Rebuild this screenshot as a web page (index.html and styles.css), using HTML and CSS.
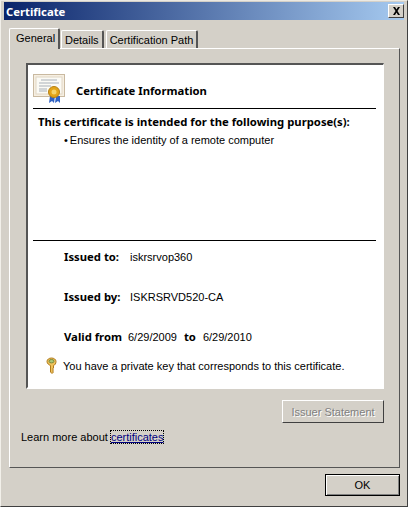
FILE: index.html
```html
<!DOCTYPE html>
<html lang="en">
<head>
    <meta charset="UTF-8">
    <meta name="viewport" content="width=device-width, initial-scale=1.0">
    <title>Certificate</title>
    <link rel="stylesheet" href="styles.css">
</head>
<body>
    <div class="window">
        <div class="titlebar">
            <span class="title">Certificate</span>
            <span class="close">
                <svg width="9" height="8" viewBox="0 0 9 8"><path d="M1 0h2l1.500 2.500L6 0h2L5.500 4 8 8H6L4.500 5.500 3 8H1l2.500-4z" fill="#000"/></svg>
            </span>
        </div>
        <ul class="tabs">
            <li class="tab active">General</li>
            <li class="tab">Details</li>
            <li class="tab tab-path">Certification Path</li>
        </ul>
        <div class="panel">
            <div class="sheet">
                <div class="sheet-head">
                    <svg class="cert-icon" width="33" height="30" viewBox="0 0 33 30">
                        <rect x="0.500" y="0.500" width="31" height="22" fill="#f6efe2" stroke="#c9b9a0"/>
                        <rect x="3" y="3" width="26" height="17" fill="#fbfaf5" stroke="#e0d6c4"/>
                        <path d="M8 6h16M6 9h20M6 12h12M6 15h8M6 17h8" stroke="#a9b0b8"/>
                        <path d="M17 22l-1 7 3-2 2 2 1-7zM23 22l-1 7 3-2 2 2 0-7z" fill="#2f62c4"/>
                        <circle cx="21" cy="18" r="5.500" fill="#e2a418" stroke="#b67f12"/>
                        <circle cx="21" cy="18" r="2.500" fill="#f4d36a"/>
                    </svg>
                    <span class="head-text">Certificate Information</span>
                </div>
                <div class="purpose">
                    <p class="purpose-title">This certificate is intended for the following purpose(s):</p>
                    <p class="purpose-item"><span class="bullet">•</span>Ensures the identity of a remote computer</p>
                </div>
                <div class="details">
                    <p class="row"><b class="label">Issued to:</b>iskrsrvop360</p>
                    <p class="row"><b class="label">Issued by:</b>ISKRSRVD520-CA</p>
                    <p class="row"><b class="valid">Valid from</b>6/29/2009<b class="to">to</b>6/29/2010</p>
                    <p class="key-row">
                        <svg class="key-icon" width="11" height="17" viewBox="0 0 11 17">
                            <path d="M5.500 1C3 1 1 2.500 1 4.500S3 8 4.500 8.500V15l1.500 1.500 1.500-1.500-1-1 1-1-1-1 1-1V8.500C9 8 10 6.500 10 4.500S8 1 5.500 1z" fill="#efc25a" stroke="#b07a1c"/>
                            <ellipse cx="5.500" cy="4.200" rx="2.500" ry="1.700" fill="#a9c77a" stroke="#7d8a3a"/>
                        </svg>
                        You have a private key that corresponds to this certificate.
                    </p>
                </div>
            </div>
            <div class="issuer-row">
                <button class="btn disabled" disabled>Issuer Statement</button>
            </div>
            <p class="learn">Learn more about <a class="link" href="#">certificates</a></p>
        </div>
        <div class="footer">
            <button class="btn ok">OK</button>
        </div>
    </div>
</body>
</html>
```

FILE: styles.css
```css
* {
    box-sizing: border-box;
}

body {
    margin: 0;
    font-family: "Liberation Sans", sans-serif;
    font-size: 11px;
    color: #000;
}

b {
    font-family: "Noto Sans", sans-serif;
    font-size: 11.300px;
}

p {
    margin: 0;
}

.window {
    width: 408px;
    height: 507px;
    background-color: #d4d0c8;
    padding: 1px 3px 0 3px;
    border-top: 1px solid #ece9e2;
    border-left: 1px solid #f2f0ea;
    border-right: 1px solid #404040;
    border-bottom: 1px solid #404040;
    overflow: hidden;
}

.titlebar {
    height: 18px;
    display: flex;
    align-items: center;
    justify-content: space-between;
    padding: 0 0 0 2px;
    background: linear-gradient(to right, #0a246a, #a6caf0);
    color: white;
}

.title {
    font-family: "Noto Sans", sans-serif;
    font-weight: bold;
    font-size: 11.300px;
}

.close {
    width: 16px;
    height: 14px;
    display: flex;
    align-items: center;
    justify-content: center;
    background-color: #d4d0c8;
    border: 1px solid;
    border-color: #fff #404040 #404040 #fff;
}

.tabs {
    list-style-type: none;
    margin: 8px 0 0 0;
    padding: 0 0 0 5px;
    height: 20px;
    display: flex;
    align-items: flex-end;
    position: relative;
    z-index: 1;
}

.tab {
    height: 18px;
    padding: 1px 3px 0 3px;
    border: 1px solid #fff;
    border-right: 2px solid #555;
    border-bottom: 0;
    border-radius: 2px 2px 0 0;
    line-height: 16px;
}

.tab.active {
    width: 51px;
    height: 21px;
    margin-right: 1px;
    margin-bottom: -1px;
    padding: 0 0 0 6px;
    background-color: #d4d0c8;
    line-height: 19px;
}

.tab-path {
    margin-left: 2px;
}

.panel {
    width: 391px;
    height: 420px;
    margin-left: 5px;
    padding: 14px 15px 0 16px;
    border: 1px solid;
    border-color: #fff #555 #555 #fff;
}

.sheet {
    width: 358px;
    height: 326px;
    background-color: #fff;
    padding: 9px 7px 0 5px;
    border: 1px solid;
    border-color: #555 #fff #fff #555;
    border-width: 2px 1px 2px 2px;
}

.sheet-head {
    height: 35px;
    display: flex;
    align-items: flex-start;
    border-bottom: 1px solid #000;
}

.cert-icon {
    flex-shrink: 0;
}

.head-text {
    margin: 9px 0 0 10px;
    font-family: "Noto Sans", sans-serif;
    font-size: 11.300px;
    font-weight: bold;
}

.purpose {
    height: 132px;
    padding: 5px 0 0 5px;
    border-bottom: 1px solid #000;
}

.purpose-title {
    font-family: "Noto Sans", sans-serif;
    font-size: 11.300px;
    font-weight: bold;
    line-height: 16px;
}

.purpose-item {
    margin: 2px 0 0 26px;
    line-height: 16px;
}

.bullet {
    margin-right: 2px;
}

.details {
    padding: 8px 0 0 0;
}

.row {
    height: 40px;
    padding-left: 31px;
    line-height: 16px;
}

.label {
    display: inline-block;
    width: 66px;
}

.valid {
    margin-right: 6px;
}

.to {
    margin: 0 7px;
}

.key-row {
    display: flex;
    align-items: center;
    margin-top: -12px;
    padding-left: 13px;
    line-height: 16px;
}

.key-icon {
    margin-right: 6px;
}

.issuer-row {
    display: flex;
    justify-content: flex-end;
    margin-top: 11px;
}

.btn {
    font-family: inherit;
    font-size: 11px;
    background-color: #d4d0c8;
    border: 1px solid;
    border-color: #fff #404040 #404040 #fff;
    padding: 0;
}

.btn.disabled {
    width: 102px;
    height: 23px;
    color: #808080;
    text-shadow: 1px 1px 0 #fff;
}

.learn {
    margin: 6px 0 0 -5px;
    line-height: 16px;
}

.link {
    color: #00007f;
    outline: 1px dotted #000;
}

.footer {
    display: flex;
    justify-content: flex-end;
    margin-top: 6px;
    padding-right: 4px;
}

.btn.ok {
    width: 75px;
    height: 22px;
    border: 1px solid #000;
    box-shadow: inset 1px 1px 0 #fff, inset -1px -1px 0 #808080;
}
```
